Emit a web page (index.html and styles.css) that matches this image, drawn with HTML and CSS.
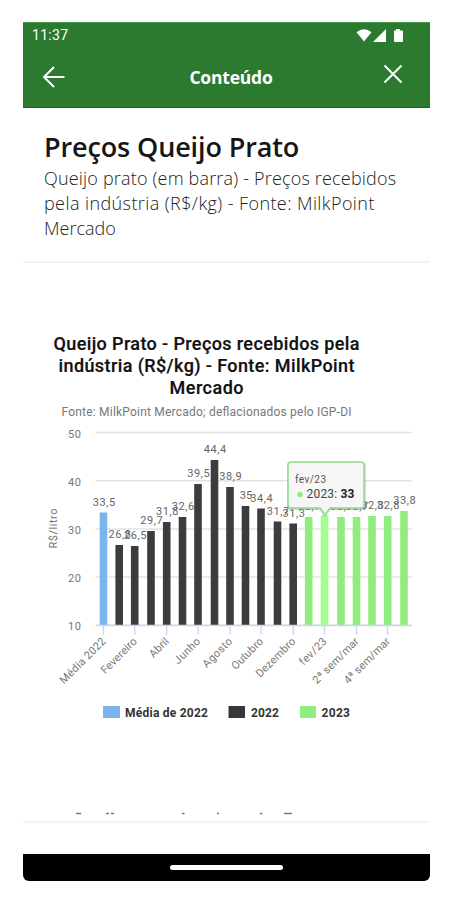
FILE: index.html
```
<!DOCTYPE html>
<html lang="pt-BR">
<head>
<meta charset="utf-8">
<meta name="viewport" content="width=device-width">
<title>Conteúdo</title>
<link rel="stylesheet" href="styles.css">
</head>
<body>
<div class="phone">
  <header class="top">
    <div class="status">
      <span class="clock">11:37</span>
      <svg class="signals" width="48" height="16" viewBox="0 0 48 16" fill="#fff" aria-hidden="true">
        <path d="M0.5 4.2Q8 -1.5 15.5 4.2L8 13.6Z"/><path d="M17.5 14V13.5L30 1V14Z"/><path d="M38 2.5h2V1h4v1.5h2q1 0 1 1V13q0 1-1 1h-7q-1 0-1-1Z"/>
      </svg>
    </div>
    <nav class="bar">
      <svg class="back" width="24" height="24" viewBox="0 0 24 24" fill="none" stroke="#fff" stroke-width="2" aria-hidden="true"><path d="M22.500 12H2.500M12 2L2 12L12 22"/></svg>
      <h1 class="heading">Conteúdo</h1>
      <svg class="close" width="20" height="20" viewBox="0 0 20 20" fill="none" stroke="#fff" stroke-width="2" aria-hidden="true"><path d="M1.500 1.500L18.500 18.500M18.500 1.500L1.500 18.500"/></svg>
    </nav>
  </header>
  <section class="intro">
    <h2 class="title">Preços Queijo Prato</h2>
    <p class="desc"><span class="l1">Queijo prato (em barra) - Preços recebidos</span><br><span class="l2">pela indústria (R$/kg) - Fonte: MilkPoint</span><br><span class="l3">Mercado</span></p>
  </section>
  <main class="content">
    <svg class="chart" id="chart" width="407" height="400" viewBox="23 325 407 400" role="img">
      <g class="chart-title">
        <text x="206.500" y="350" textLength="306">Queijo Prato - Preços recebidos pela</text>
        <text x="206.500" y="372" textLength="296">indústria (R$/kg) - Fonte: MilkPoint</text>
        <text x="206.500" y="393.500" textLength="74">Mercado</text>
      </g>
      <text class="sub" x="206.500" y="415.500" textLength="290">Fonte: MilkPoint Mercado; deflacionados pelo IGP-DI</text>
      <text class="axis-title" transform="translate(57 528.500) rotate(-90)" textLength="40">R$/litro</text>
      <g id="grid"></g>
      <g id="bars"></g>
      <g id="labels"></g>
      <g class="tooltip">
        <path class="tip-shadow" d="M291 463H362Q365 463 365 466V506Q365 509 362 509H330L325 515.500L320 509H291Q288 509 288 506V466Q288 463 291 463Z"/>
        <path class="tip-box" d="M291 462H361Q364 462 364 465V505Q364 508 361 508H330L325 515L320 508H291Q288 508 288 505V465Q288 462 291 462Z"/>
        <text class="tip-date" x="295" y="482.500" textLength="31">fev/23</text>
        <circle cx="300" cy="494.500" r="2.700" fill="#90ed7d"/>
        <text class="tip-value" x="306.500" y="498" textLength="48">2023: <tspan class="strong">33</tspan></text>
      </g>
      <g class="legend">
        <rect x="103" y="706" width="17" height="12" fill="#7cb5ec"/><text x="125" y="717" textLength="83">Média de 2022</text>
        <rect x="228.500" y="706" width="16.500" height="12" fill="#37373b"/><text x="251" y="717" textLength="28">2022</text>
        <rect x="300" y="706" width="16" height="12" fill="#90ed7d"/><text x="321.500" y="717" textLength="28.500">2023</text>
      </g>
    </svg>
    <svg class="peek" width="407" height="3" viewBox="23 0 407 3" aria-hidden="true">
      <path d="M76 1.500H81M106 1.500H109M111 1.500H114M182 1.500H184.500M217 1.500H219M260 1.500H262.500M284 1.500H292"/>
    </svg>
  </main>
  <footer class="system"><span class="pill"></span></footer>
</div>
<script src="chart.js"></script>
</body>
</html>
```
FILE: styles.css
```
* { box-sizing: border-box; }
body { margin: 0; background: #fff; font-family: "Open Sans", sans-serif; }
.phone { display: flex; flex-direction: column; width: 407px; height: 859px; margin: 22px 0 0 23px; }
.top { height: 86px; background: #2b7a30; color: #fff; border-top: 1px solid #4b994f; border-bottom: 1px solid #146a1b; }
.status { display: flex; justify-content: space-between; align-items: center; height: 24px; padding: 0 26px 0 9px; }
.clock { font: 400 14px/24px Roboto, sans-serif; letter-spacing: .3px; }
.signals { margin-top: 1px; }
.bar { display: grid; grid-template-columns: 40px 1fr 40px; align-items: center; height: 60px; }
.back { margin-left: 19px; }
.heading { margin: 0; padding-left: 9px; text-align: center; font-size: 17.5px; line-height: 60px; font-weight: 700; letter-spacing: -.2px; }
.close { margin: -6px 0 0 -7px; }
.intro { height: 155px; padding: 22px 21px 0; border-bottom: 2px solid #f2f2f2; }
.title { margin: 0; font-size: 27px; line-height: 34px; font-weight: 600; letter-spacing: -.12px; color: #161616; white-space: nowrap; }
.desc { margin: 2px 0 0; font-size: 18px; line-height: 25px; font-weight: 300; color: #222; white-space: nowrap; }
.l1 { letter-spacing: .18px; }
.l2 { letter-spacing: .41px; }
.l3 { letter-spacing: 0; }
.content { display: flex; flex-direction: column; justify-content: space-between; height: 560px; padding: 62px 0 6px; border-bottom: 2px solid #f4f4f4; }
.chart { display: block; font-family: Roboto, sans-serif; }
.chart-title { font-size: 18px; font-weight: 500; text-anchor: middle; fill: #111; stroke: #111; stroke-width: .2; }
.sub { font-size: 12px; text-anchor: middle; fill: #777; }
.axis-title { text-anchor: middle; font-size: 11px; fill: #777; }
.y-label { font-size: 11px; text-anchor: end; fill: #777; }
.x-label { font-size: 11px; text-anchor: end; fill: #777; }
.value { font-size: 11px; text-anchor: middle; fill: #666; }
.grid-line { stroke: #e3e3e3; stroke-width: 1.5; }
.axis-line { stroke: #ccd6eb; stroke-width: 1.3; }
.tip-shadow { fill: #999; opacity: .35; stroke: #999; stroke-width: 2; }
.tip-box { fill: #f9f9f9; fill-opacity: .95; stroke: #90dd88; stroke-width: 1.5; }
.tip-date { font-size: 10px; fill: #555; }
.tip-value { font-size: 12px; fill: #444; }
.strong { font-weight: 700; fill: #222; }
.legend { font-size: 12px; font-weight: 700; fill: #333; }
.peek { display: block; }
.peek path { stroke: #777; stroke-width: 1.3; }
.system { display: flex; justify-content: center; height: 27px; margin-top: auto; padding-top: 10.5px; background: #000; border-radius: 0 0 6px 6px; }
.pill { width: 113px; height: 5px; border-radius: 3px; background: #fff; }
```
FILE: chart.js
```
const ns = "http://www.w3.org/2000/svg";
function add(parent, tag, attrs, text) {
  const el = document.createElementNS(ns, tag);
  for (const key in attrs) el.setAttribute(key, attrs[key]);
  if (text) el.textContent = text;
  document.getElementById(parent).appendChild(el);
}
const base = 625;
[50, 40, 30, 20, 10].forEach((v, i) => {
  const y = 432.5 + i * 48.2;
  add("grid", "line", { class: "grid-line", x1: 96, x2: 412, y1: y, y2: y });
  add("grid", "text", { class: "y-label", x: 81, y: y + 5, textLength: 13 }, String(v));
});
// Centre, bar top, and value label
const points = [
  [103.5, 512.5, "33,5"], [119.2, 545, "26,8"], [134.7, 546, "26,5"],
  [151, 531, "29,7"], [166.7, 522, "31,8"], [182.5, 517, "32,6"],
  [198, 484, "39,5"], [214.5, 460, "44,4"], [230, 487, "38,9"],
  [245.5, 506, "35"], [261, 508.5, "34,4"], [277.5, 521.5, "31,7"],
  [293.2, 523.5, "31,3"], [308.7, 517, "32,7"], [324.5, 515, "33"],
  [341, 517, "32,7"], [356.5, 517, "32,7"], [372, 516, "32,8"],
  [387.7, 516, "32,8"], [404, 511, "33,8"]
];
points.forEach(([x, top, text], i) => {
  const color = i === 0 ? "#7cb5ec" : i < 13 ? "#3c3c40" : i === 14 ? "#a4ff91" : "#90ed7d";
  add("bars", "rect", { x: x - 3.8, y: top, width: 7.6, height: base - top, fill: color });
  const attrs = { class: "value", x: x + .5, y: top - 7 };
  if (text.length === 4) attrs.textLength = 22.5;
  add("labels", "text", attrs, text);
});
add("bars", "line", { class: "axis-line", x1: 96, x2: 412, y1: 625.5, y2: 625.5 });
[
  [103.5, "Média 2022", 60], [134.7, "Fevereiro", 46], [166.7, "Abril", 23],
  [198, "Junho", 32], [230, "Agosto", 37], [261, "Outubro", 40],
  [293.2, "Dezembro", 51], [324.5, "fev/23", 34], [356.5, "2ª sem/mar", 60],
  [387.7, "4ª sem/mar", 60]
].forEach(([x, label, length]) => {
  add("bars", "line", { class: "axis-line", x1: x, x2: x, y1: 626, y2: 635 });
  add("labels", "text", { class: "x-label", transform: `translate(${x + 3} 642) rotate(-45)`, textLength: length }, label);
});
```
